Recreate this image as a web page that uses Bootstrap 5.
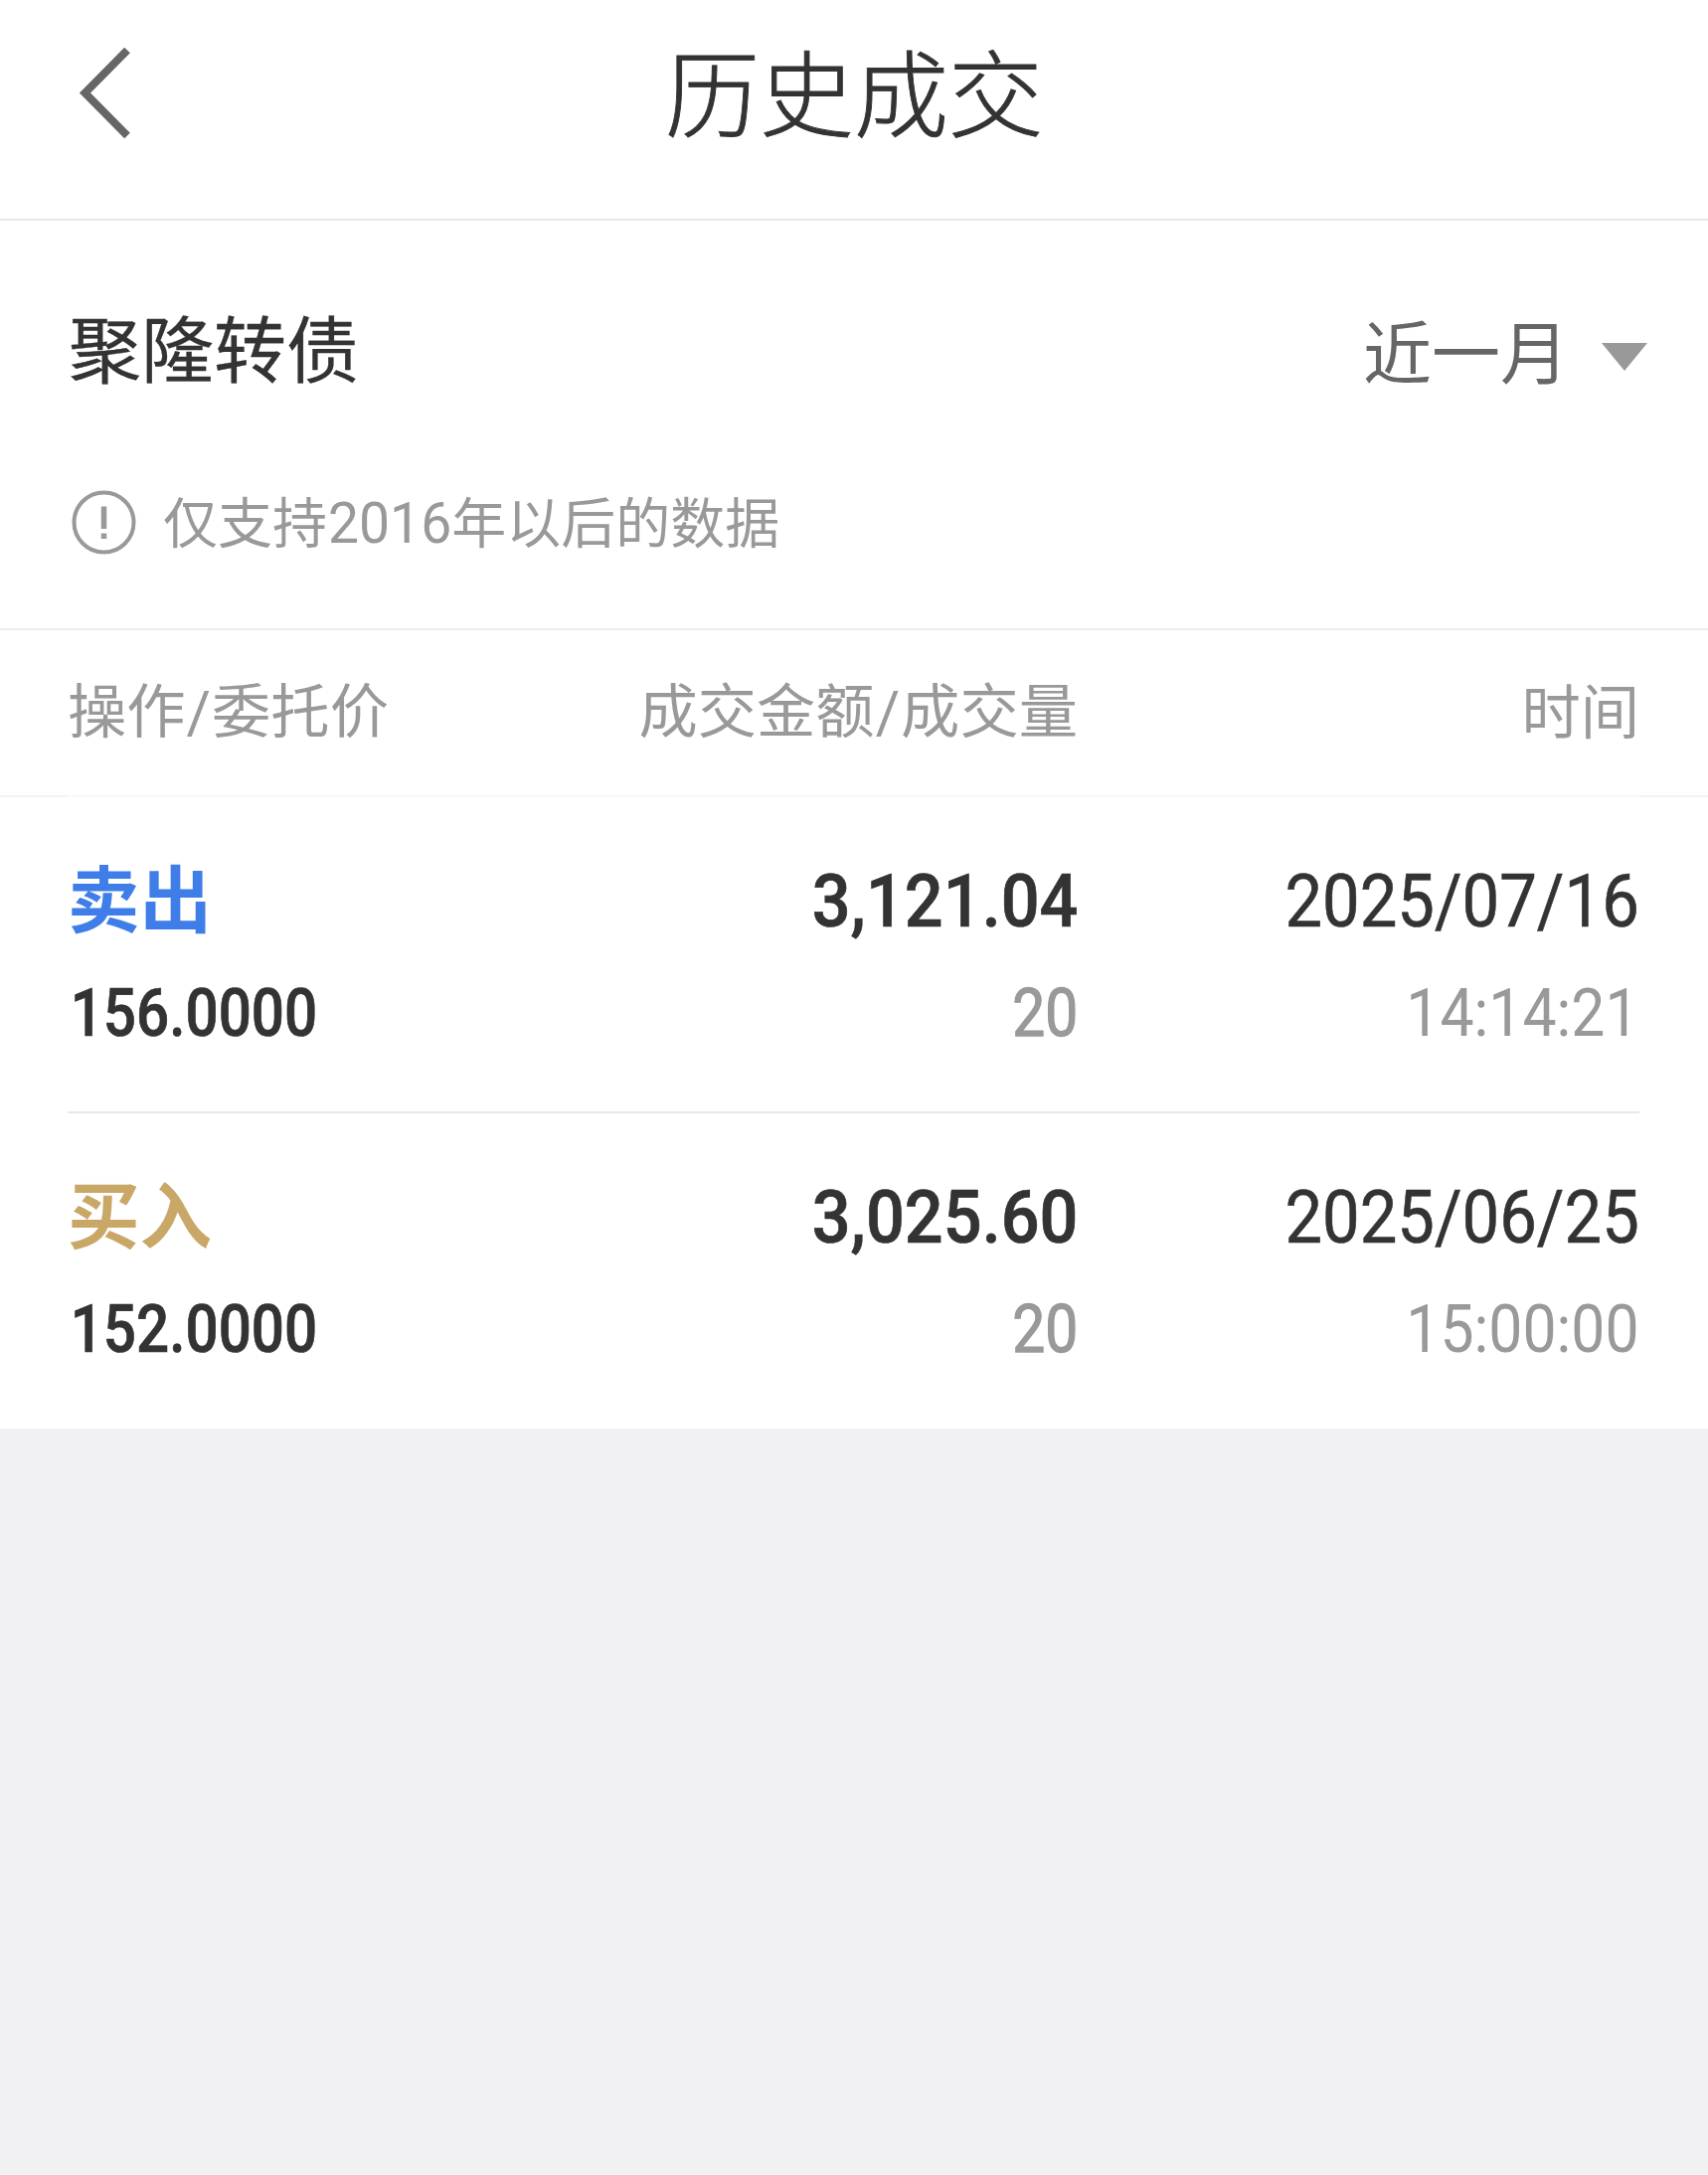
<!DOCTYPE html>
<html lang="zh-CN">
<head>
<meta charset="utf-8">
<meta name="viewport" content="width=device-width, initial-scale=1">
<title>历史成交</title>
<link href="https://cdn.jsdelivr.net/npm/bootstrap@5.3.0/dist/css/bootstrap.min.css" rel="stylesheet">
<style>
  body { background: #f1f1f4; color: #333; font-family: "Noto Sans CJK SC", sans-serif; }
  .topbar { height: 222px; padding-bottom: 32px; border-bottom: 2px solid #e8e8e8; }
  .topbar h1 { font-size: 95px; font-weight: 300; line-height: 1; padding-bottom: 10px; -webkit-text-stroke: .9px #333; }
  .side { width: 140px; }
  .side svg { margin-left: 78px; }
  .filters { height: 412px; padding: 89px 69px 0 69px; border-bottom: 2px solid #ececec; }
  .stock { font-size: 73px; font-weight: 400; line-height: 72px; -webkit-text-stroke: .3px #333; }
  .period { font-size: 69px; line-height: 72px; color: #666; margin-right: -8px; gap: 33px; padding-top: 4px; }
  .period svg { margin-top: 15px; }
  .hint { font-size: 55px; line-height: 60px; color: #999; gap: 26px; margin: 105px 0 0 1px; }
  .hint span { margin-top: -3px; }
  .px68 { padding-left: 68px; padding-right: 69px; }
  .c1 { width: 400px; }
  .c2 { width: 616px; text-align: right; }
  .c3 { width: 565px; text-align: right; }
  .heads { height: 166px; padding-bottom: 8px; color: #999; font-size: 59.3px; line-height: 60px; }
  .heads i { font-style: normal; font-family: Roboto, sans-serif; margin: 0 1px; }
  .heads .c1, .heads .c2 { padding-top: 1px; }
  .heads .c3 { padding-bottom: 2px; }
  .heads-line { height: 2px; background: linear-gradient(90deg, #f3f3f3 68px, #f9f9f9 68px calc(100% - 69px), #f3f3f3 0); }
  .trade { height: 316px; padding-top: 68px; }
  .trade:last-child { height: 317px; }
  .divider { height: 2px; margin: 0 69px 0 68px; background: #e8e8e8; }
  .line1 { height: 74px; line-height: 74px; }
  .line2 { height: 66px; line-height: 66px; margin-top: 43px; }
  .act { font-size: 72.5px; font-weight: 700; line-height: 62px; }
  .sell { color: #3f7ee8; }
  .buy { color: #c9a767; }
  .num { display: inline-block; font-family: Roboto, sans-serif; transform: scaleX(.92); transform-origin: right; }
  .line1 .num { font-size: 74px; }
  .line2 .num { font-size: 66px; }
  .line1 .w5 { transform: scaleX(.925); }
  .line1 .date { transform: scaleX(.905); -webkit-text-stroke: .6px #333; }
  .line2 .qty { transform: scaleX(.89); -webkit-text-stroke: 1.3px #999; }
  .line2 .price { transform: scaleX(.885); transform-origin: left; padding-left: 3px; }
  .w5 { font-weight: 500; -webkit-text-stroke: .7px #333; }
  .grey { color: #999; }
  .hint .year { display: inline-block; font-family: Roboto, sans-serif; font-size: 57px; transform: scaleX(.97); margin: 0 -1.5px; }
</style>
<script src="https://cdn.jsdelivr.net/npm/bootstrap@5.3.0/dist/js/bootstrap.bundle.min.js"></script>
</head>
<body>
<main class="bg-white">
  <header class="topbar d-flex align-items-center justify-content-between">
    <div class="side d-flex"><svg width="56" height="96" viewBox="0 0 56 96" fill="none" stroke="#666" stroke-width="8"><path d="M50 4.500 7.500 47.500 50 90.500"/></svg></div>
    <h1 class="m-0">历史成交</h1>
    <div class="side"></div>
  </header>

  <section class="filters">
    <div class="d-flex justify-content-between">
      <div class="stock">聚隆转债</div>
      <div class="period d-flex align-items-center"><span>近一月</span><svg width="46" height="28" viewBox="0 0 46 28"><path d="M0 0H46L23 28Z" fill="#999"/></svg></div>
    </div>
    <div class="hint d-flex align-items-center">
      <svg width="68" height="68" viewBox="0 0 68 68"><circle cx="34.500" cy="33.500" r="30" fill="none" stroke="#999" stroke-width="4"/><path d="M34.500 17.500V40M34.500 44.500V50" stroke="#999" stroke-width="5.500"/></svg>
      <span>仅支持<span class="year">2016</span>年以后的数据</span>
    </div>
  </section>

  <div class="heads px68 d-flex align-items-center">
    <div class="c1">操作<i>/</i>委托价</div>
    <div class="c2">成交金额<i>/</i>成交量</div>
    <div class="c3">时间</div>
  </div>
  <div class="heads-line"></div>

  <section>
    <div class="trade px68">
      <div class="line1 d-flex">
        <div class="c1 act sell">卖出</div>
        <div class="c2"><span class="num w5">3,121.04</span></div>
        <div class="c3"><span class="num date">2025/07/16</span></div>
      </div>
      <div class="line2 d-flex">
        <div class="c1"><span class="num w5 price">156.0000</span></div>
        <div class="c2 grey"><span class="num qty">20</span></div>
        <div class="c3 grey"><span class="num">14:14:21</span></div>
      </div>
    </div>
    <div class="divider"></div>
    <div class="trade px68">
      <div class="line1 d-flex">
        <div class="c1 act buy">买入</div>
        <div class="c2"><span class="num w5">3,025.60</span></div>
        <div class="c3"><span class="num date">2025/06/25</span></div>
      </div>
      <div class="line2 d-flex">
        <div class="c1"><span class="num w5 price">152.0000</span></div>
        <div class="c2 grey"><span class="num qty">20</span></div>
        <div class="c3 grey"><span class="num">15:00:00</span></div>
      </div>
    </div>
  </section>
</main>
</body>
</html>
